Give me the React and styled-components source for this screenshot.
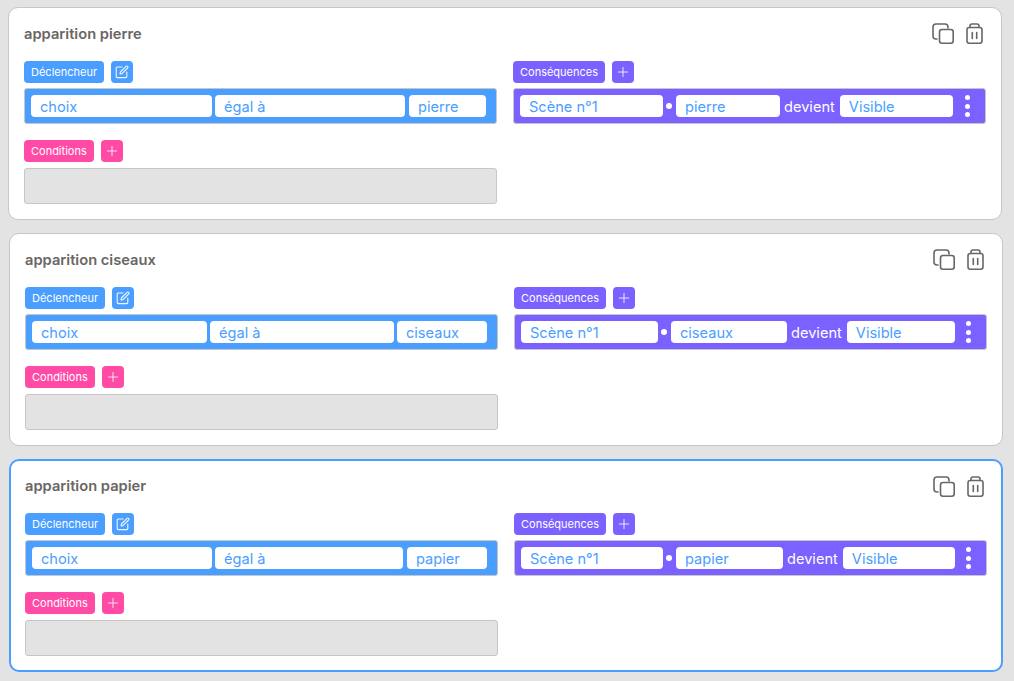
import React from 'react';
import styled, { createGlobalStyle } from 'styled-components';
import { Plus } from 'lucide-react';

const BLUE = '#4a9eff';
const PURPLE = '#7b61ff';
const PINK = '#ff4ba6';

const GlobalStyle = createGlobalStyle`
    html, body {
        margin: 0;
        height: 100%;
        background: #e3e3e3;
        font-family: "Inter", "Liberation Sans", sans-serif;
        overflow: hidden;
    }
`;

const Page = styled.div`
    display: flex;
    flex-direction: column;
    gap: 13px;
    padding-top: 7px;
`;

const Card = styled.section`
    box-sizing: border-box;
    width: 994px;
    height: 213px;
    margin-left: ${p => p.$left}px;
    background: #fff;
    border: ${p => p.$selected ? `2px solid ${BLUE}` : '1px solid #c6c6c6'};
    padding: ${p => p.$selected ? '0 14px' : '0 15px'};
    border-radius: 10px;
`;

const Header = styled.div`
    box-sizing: border-box;
    display: flex;
    align-items: center;
    justify-content: space-between;
    height: ${p => p.$selected ? 52 : 53}px;
    padding-bottom: 2px;
`;

const Title = styled.h2`
    margin: 0;
    font-size: 14.7px;
    font-weight: 600;
    color: #6a6663;
`;

const Actions = styled.div`
    display: flex;
    align-items: center;
    gap: 12px;
    margin-right: 3px;
    color: #6a6663;
`;

const Columns = styled.div`
    display: grid;
    grid-template-columns: 473px 473px;
    column-gap: 16px;
`;

const Column = styled.div`
    display: flex;
    flex-direction: column;
`;

const LabelRow = styled.div`
    display: flex;
    gap: 7px;
    margin-bottom: ${p => p.$below}px;
    margin-top: ${p => p.$top || 0}px;
`;

const Label = styled.div`
    display: flex;
    align-items: center;
    height: 22px;
    padding: 0 7px;
    border-radius: 4px;
    background: ${p => p.$color};
    color: #fff;
    font-size: 11px;
    font-weight: 400;
`;

const IconButton = styled.div`
    display: flex;
    align-items: center;
    justify-content: center;
    width: 22px;
    height: 22px;
    border-radius: 4px;
    background: ${p => p.$color};
    color: rgba(255, 255, 255, 0.9);
`;

const Bar = styled.div`
    box-sizing: border-box;
    display: flex;
    align-items: center;
    height: 36px;
    padding-left: 6px;
    border: 1px solid #c6c6c6;
    border-radius: 3px;
    background: ${p => p.$color};
`;

const Chip = styled.div`
    box-sizing: border-box;
    display: flex;
    align-items: center;
    flex: none;
    width: ${p => p.$w}px;
    height: 22px;
    margin-left: ${p => p.$before || 0}px;
    margin-right: ${p => p.$after || 0}px;
    padding: 1px 0 0 9px;
    border-radius: 4px;
    background: #fff;
    color: ${BLUE};
    font-size: 14.6px;
`;

const Dot = styled.span`
    flex: none;
    width: ${p => p.$size}px;
    height: ${p => p.$size}px;
    border-radius: 50%;
    background: #fff;
`;

const Word = styled.span`
    flex: none;
    color: #fff;
    font-size: 14.6px;
    margin: 1px 5px 0 4px;
`;

const More = styled.div`
    display: flex;
    flex-direction: column;
    gap: 3.5px;
    margin-left: auto;
    margin-right: 15px;
`;

const EmptyBox = styled.div`
    box-sizing: border-box;
    height: 36px;
    border: 1px solid #c6c6c6;
    border-radius: 3px;
    background: #e3e3e3;
`;

const CopyIcon = () => (
    <svg width="22" height="21" viewBox="0 0 22 21" fill="none" stroke="currentColor" strokeWidth="1.6" strokeLinecap="round">
        <path d="M5 16 H4 a3 3 0 0 1 -3 -3 V4 a3 3 0 0 1 3 -3 h9 a3 3 0 0 1 3 3 v1" />
        <rect x="7.5" y="6.5" width="13.7" height="13.7" rx="2.5" />
    </svg>
);

const TrashIcon = () => (
    <svg width="17" height="21" viewBox="0 0 17 21" fill="none" stroke="currentColor" strokeWidth="1.6" strokeLinecap="round">
        <rect x="1" y="4.5" width="15" height="15.7" rx="2.2" />
        <path d="M4 4.5 V3 a2 2 0 0 1 2 -2 h5 a2 2 0 0 1 2 2 v1.5" />
        <path d="M6.3 9.5 v6 M10.7 9.5 v6" />
    </svg>
);

const EditIcon = () => (
    <svg width="14" height="14" viewBox="0 0 14 14" fill="none" stroke="currentColor" strokeWidth="1.1" strokeLinecap="round" strokeLinejoin="round">
        <path d="M7 2 H2.2 a1 1 0 0 0 -1 1 v8.6 a1 1 0 0 0 1 1 h8.6 a1 1 0 0 0 1 -1 V7" />
        <path d="M5.4 7 L11 1.4 a1.1 1.1 0 0 1 1.6 1.6 L7 8.6 L5 9 Z" />
    </svg>
);

const rules = [
    {
        name: 'apparition pierre', left: 8, value: 'pierre',
        when: [181, 190, 77], gaps: [3, 4],
        then: { scene: 143, item: 104, visible: 113 },
    },
    {
        name: 'apparition ciseaux', left: 9, value: 'ciseaux',
        when: [175, 184, 90], gaps: [3, 3],
        then: { scene: 137, item: 116, visible: 108 },
    },
    {
        name: 'apparition papier', left: 9, value: 'papier', selected: true,
        when: [180, 188, 80], gaps: [3, 4],
        then: { scene: 142, item: 107, visible: 112 },
    },
];

function Rule({ rule }) {
    return (
        <Card $left={rule.left} $selected={rule.selected}>
            <Header $selected={rule.selected}>
                <Title>{rule.name}</Title>
                <Actions>
                    <CopyIcon />
                    <TrashIcon />
                </Actions>
            </Header>
            <Columns>
                <Column>
                    <LabelRow $below={5}>
                        <Label $color={BLUE}>Déclencheur</Label>
                        <IconButton $color={BLUE}><EditIcon /></IconButton>
                    </LabelRow>
                    <Bar $color={BLUE}>
                        <Chip $w={rule.when[0]} $after={rule.gaps[0]}>choix</Chip>
                        <Chip $w={rule.when[1]} $after={rule.gaps[1]}>égal à</Chip>
                        <Chip $w={rule.when[2]}>{rule.value}</Chip>
                    </Bar>
                    <LabelRow $top={16} $below={6}>
                        <Label $color={PINK}>Conditions</Label>
                        <IconButton $color={PINK}><Plus size={16} strokeWidth={1.4} /></IconButton>
                    </LabelRow>
                    <EmptyBox />
                </Column>
                <Column>
                    <LabelRow $below={5}>
                        <Label $color={PURPLE}>Conséquences</Label>
                        <IconButton $color={PURPLE}><Plus size={16} strokeWidth={1.4} /></IconButton>
                    </LabelRow>
                    <Bar $color={PURPLE}>
                        <Chip $w={rule.then.scene} $after={3}>Scène n°1</Chip>
                        <Dot $size={6} />
                        <Chip $w={rule.then.item} $before={4}>{rule.value}</Chip>
                        <Word>devient</Word>
                        <Chip $w={rule.then.visible}>Visible</Chip>
                        <More><Dot $size={5} /><Dot $size={5} /><Dot $size={5} /></More>
                    </Bar>
                </Column>
            </Columns>
        </Card>
    );
}

export default function App() {
    return (
        <Page>
            <GlobalStyle />
            {rules.map(rule => <Rule key={rule.name} rule={rule} />)}
        </Page>
    );
}
